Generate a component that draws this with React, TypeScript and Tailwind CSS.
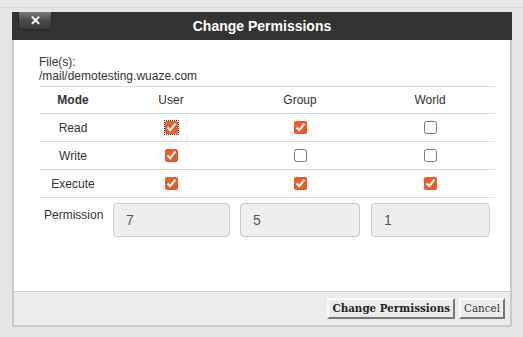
import React from "react";

const Cb = ({ checked, focus }: { checked: boolean; focus?: boolean }) => (
  <input
    type="checkbox"
    defaultChecked={checked}
    className={
      "m-0 h-[13px] w-[13px] accent-[#f05a28] " +
      (focus ? "outline-1 outline-dotted outline-[#333] outline-offset-0" : "")
    }
  />
);

const rows: { label: string; vals: boolean[] }[] = [
  { label: "Read", vals: [true, true, false] },
  { label: "Write", vals: [true, false, false] },
  { label: "Execute", vals: [true, true, true] },
];

export default function App() {
  return (
    <div
      className="relative h-[337px] w-[523px] overflow-hidden bg-[#e5e5e5]"
      style={{ fontFamily: '"Liberation Sans", Arial, sans-serif' }}
    >
      <div className="h-[8px] w-full border-b border-[#d5d5d5] bg-[#e7e7e7]" />
      <div className="ml-[12px] mt-[4px] flex w-[500px] flex-col">
        {/* header */}
        <div className="relative flex h-[28px] items-center justify-center bg-[#333333]">
          <button className="absolute left-[6px] top-0 flex h-[18px] w-[34px] items-center justify-center rounded-b-[4px] border border-t-0 border-[#1f2a30] bg-gradient-to-b from-[#7a7a7a] via-[#4a4a4a] to-[#3a3a3a] text-[13px] font-bold leading-none text-white">
            ✕
          </button>
          <span className="text-[14px] font-bold text-white">Change Permissions</span>
        </div>
        {/* body */}
        <div className="h-[251px] border-x-2 border-[#c9c9c9] bg-white pl-[25px] pr-[15px] pt-[15px] text-[12px] text-[#333]">
          <div className="leading-[14px]">File(s):</div>
          <div className="leading-[14px]">/mail/demotesting.wuaze.com</div>
          <div className="mt-[3px] grid grid-cols-[68px_128px_130px_130px] border-t border-[#dddddd]">
            <div className="flex h-[27px] items-center justify-center border-b border-[#dddddd] font-bold">Mode</div>
            <div className="flex h-[27px] items-center justify-center border-b border-[#dddddd]">User</div>
            <div className="flex h-[27px] items-center justify-center border-b border-[#dddddd]">Group</div>
            <div className="flex h-[27px] items-center justify-center border-b border-[#dddddd]">World</div>
            {rows.map((r, ri) => (
              <React.Fragment key={r.label}>
                <div className="flex h-[28px] items-center justify-center border-b border-[#dddddd]">{r.label}</div>
                {r.vals.map((v, i) => (
                  <div key={i} className="flex h-[28px] items-center justify-center border-b border-[#dddddd]">
                    <Cb checked={v} focus={ri === 0 && i === 0} />
                  </div>
                ))}
              </React.Fragment>
            ))}
            <div className="pl-[5px] pt-[8px]">Permission</div>
            <div className="pl-[6px] pr-[5px] pt-[5px]">
              <div className="flex h-[34px] items-center rounded-[4px] border border-[#cccccc] bg-[#eeeeee] pl-[12px] text-[14px] text-[#555]">7</div>
            </div>
            <div className="pl-[5px] pr-[5px] pt-[5px]">
              <div className="flex h-[34px] items-center rounded-[4px] border border-[#cccccc] bg-[#eeeeee] pl-[12px] text-[14px] text-[#555]">5</div>
            </div>
            <div className="pl-[6px] pr-[5px] pt-[5px]">
              <div className="flex h-[34px] items-center rounded-[4px] border border-[#cccccc] bg-[#eeeeee] pl-[12px] text-[14px] text-[#555]">1</div>
            </div>
          </div>
        </div>
        {/* footer */}
        <div
          className="flex h-[36px] items-start justify-end gap-[4px] border-x-2 border-b-2 border-t border-[#c9c9c9] bg-[#ececec] pr-[5px] pt-[6px]"
          style={{ fontFamily: '"DejaVu Serif Condensed", "DejaVu Serif", serif', fontStretch: "condensed" }}
        >
          <button className="h-[21px] border-2 border-b-[#777] border-l-[#fafafa] border-r-[#777] border-t-[#fafafa] bg-[#ececec] px-[3px] text-[11.5px] font-bold text-[#222]">
            Change Permissions
          </button>
          <button className="h-[21px] border-2 border-b-[#777] border-l-[#fafafa] border-r-[#777] border-t-[#fafafa] bg-[#ececec] px-[3px] text-[11.5px] text-[#333]">
            Cancel
          </button>
        </div>
      </div>
    </div>
  );
}
